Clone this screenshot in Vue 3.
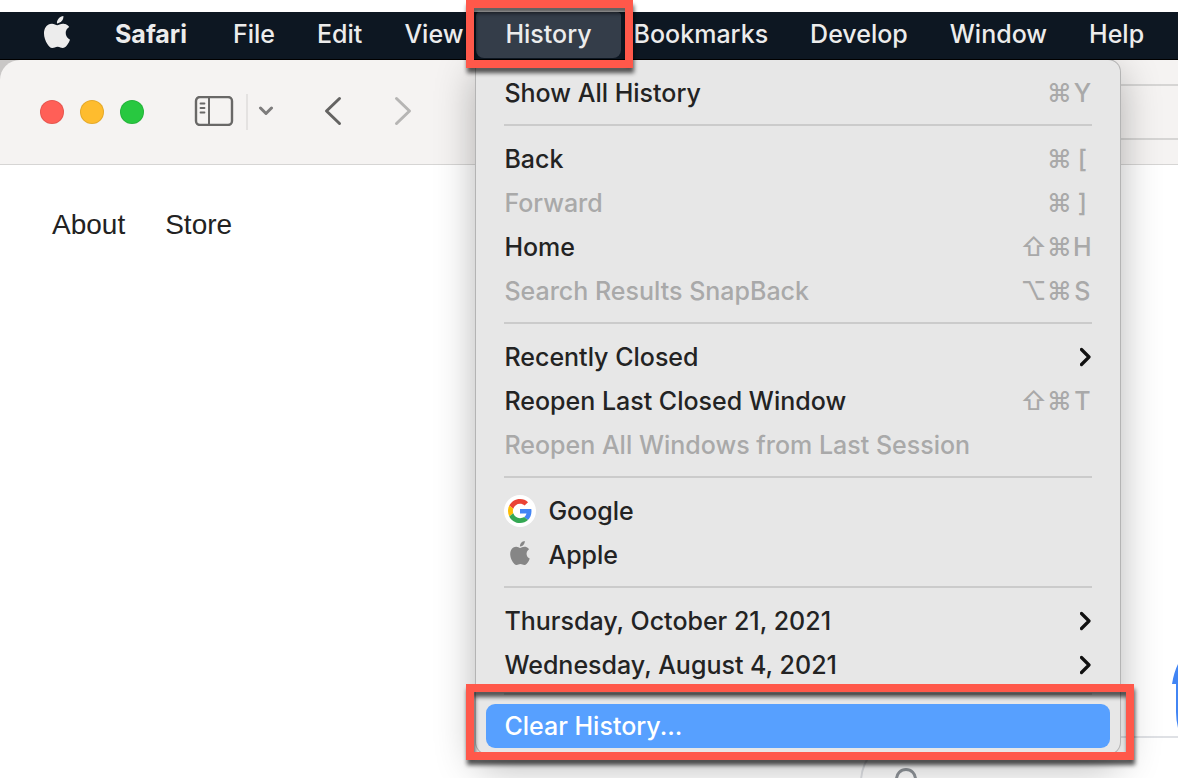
<script setup>
const menusBefore = ['File', 'Edit', 'View']
const menusAfter = ['Bookmarks', 'Develop', 'Window', 'Help']

const groups = [
  [{ label: 'Show All History', keys: ['⌘', 'Y'] }],
  [
    { label: 'Back', keys: ['⌘', '['] },
    { label: 'Forward', keys: ['⌘', ']'], disabled: true },
    { label: 'Home', keys: ['⇧', '⌘', 'H'] },
    { label: 'Search Results SnapBack', keys: ['⌥', '⌘', 'S'], disabled: true },
  ],
  [
    { label: 'Recently Closed', submenu: true },
    { label: 'Reopen Last Closed Window', keys: ['⇧', '⌘', 'T'] },
    { label: 'Reopen All Windows from Last Session', disabled: true },
  ],
  [
    { label: 'Google', icon: 'google' },
    { label: 'Apple', icon: 'apple' },
  ],
  [
    { label: 'Thursday, October 21, 2021', submenu: true },
    { label: 'Wednesday, August 4, 2021', submenu: true },
  ],
]

const applePath =
  'M12.152 6.896c-.948 0-2.415-1.078-3.96-1.04-2.04.027-3.91 1.183-4.961 3.014-2.117 3.675-.546 9.103 1.519 12.09 1.013 1.454 2.208 3.09 3.792 3.039 1.52-.065 2.09-.987 3.935-.987 1.831 0 2.35.987 3.96.948 1.637-.026 2.676-1.48 3.676-2.948 1.156-1.688 1.636-3.325 1.662-3.415-.039-.013-3.182-1.221-3.22-4.857-.026-3.04 2.48-4.494 2.597-4.559-1.429-2.09-3.623-2.324-4.39-2.376-2-.156-3.675 1.09-4.61 1.09zM15.53 3.83c.843-1.012 1.4-2.427 1.245-3.83-1.207.052-2.662.805-3.532 1.818-.78.896-1.454 2.338-1.273 3.714 1.338.104 2.715-.688 3.559-1.701'
</script>

<template>
  <div class="desktop">
    <nav class="menubar" aria-label="Menu bar">
      <button class="menu-title logo" aria-label="Apple menu">
        <svg viewBox="0 0 24 24" width="32" height="32"><path :d="applePath" fill="currentColor" /></svg>
      </button>
      <button class="menu-title app-name">Safari</button>
      <button v-for="name in menusBefore" :key="name" class="menu-title">{{ name }}</button>

      <div class="menu-holder">
        <button class="menu-title active" aria-expanded="true">History</button>

        <div class="dropdown">
          <ul v-for="(group, i) in groups" :key="i" class="group">
            <li v-for="item in group" :key="item.label">
              <button class="item" :disabled="item.disabled">
                <span v-if="item.icon === 'google'" class="favicon round">
                  <svg viewBox="0 0 48 48" width="24" height="24">
                    <path fill="#EA4335" d="M24 9.5c3.54 0 6.71 1.22 9.21 3.6l6.85-6.85C35.9 2.38 30.47 0 24 0 14.62 0 6.51 5.38 2.56 13.22l7.98 6.19C12.43 13.72 17.74 9.5 24 9.5z" />
                    <path fill="#4285F4" d="M46.98 24.55c0-1.57-.15-3.09-.38-4.55H24v9.02h12.94c-.58 2.96-2.26 5.48-4.78 7.18l7.73 6c4.51-4.18 7.09-10.36 7.09-17.65z" />
                    <path fill="#FBBC05" d="M10.53 28.59c-.48-1.45-.76-2.99-.76-4.59s.27-3.14.76-4.59l-7.98-6.19C.92 16.46 0 20.12 0 24c0 3.88.92 7.54 2.56 10.78l7.97-6.19z" />
                    <path fill="#34A853" d="M24 48c6.48 0 11.93-2.13 15.89-5.81l-7.73-6c-2.15 1.45-4.92 2.3-8.16 2.3-6.26 0-11.57-4.22-13.47-9.91l-7.98 6.19C6.51 42.62 14.62 48 24 48z" />
                  </svg>
                </span>
                <span v-else-if="item.icon === 'apple'" class="favicon">
                  <svg viewBox="0 0 24 28" width="24" height="28"><path :d="applePath" fill="#868686" /></svg>
                </span>
                <span class="label">{{ item.label }}</span>
                <span v-if="item.keys" class="keys">
                  <span v-for="key in item.keys" :key="key" class="key">{{ key }}</span>
                </span>
                <svg v-if="item.submenu" viewBox="0 0 12 20" width="12" height="20">
                  <path d="M1.500 2.500L9 10L1.500 17.500" fill="none" stroke="#111" stroke-width="3.200" stroke-linecap="round" stroke-linejoin="round" />
                </svg>
              </button>
            </li>
          </ul>

          <div class="clear">
            <button class="item selected"><span class="label">Clear History...</span></button>
            <div class="callout callout-clear"></div>
          </div>
        </div>

        <div class="callout callout-title"></div>
      </div>

      <button v-for="name in menusAfter" :key="name" class="menu-title">{{ name }}</button>
    </nav>

    <div class="window">
      <header class="toolbar">
        <div class="lights">
          <button class="light red" aria-label="Close"></button>
          <button class="light yellow" aria-label="Minimize"></button>
          <button class="light green" aria-label="Zoom"></button>
        </div>
        <button class="tool sidebar" aria-label="Sidebar">
          <svg viewBox="0 0 40 30" width="40" height="30" fill="none" stroke="#696867" stroke-linecap="round">
            <rect x="2" y="1" width="36" height="28" rx="4" stroke-width="2.400" />
            <path d="M15 1v28" stroke-width="2" stroke-linecap="butt" />
            <path d="M6.500 7.500h4M6.500 12h4M6.500 16.500h4" stroke-width="1.800" />
          </svg>
        </button>
        <span class="divider"></span>
        <button class="tool chevron" aria-label="Tab groups">
          <svg viewBox="0 0 16 10" width="16" height="10" fill="none" stroke="#7d7c7c" stroke-width="3" stroke-linecap="round" stroke-linejoin="round">
            <path d="M2.500 2L8 7.500L13.500 2" />
          </svg>
        </button>
        <button class="tool back" aria-label="Back">
          <svg viewBox="0 0 18 30" width="18" height="30" fill="none" stroke="#646362" stroke-width="3" stroke-linecap="round" stroke-linejoin="round">
            <path d="M15.500 2.500L2.500 15L15.500 27.500" />
          </svg>
        </button>
        <button class="tool forward" aria-label="Forward">
          <svg viewBox="0 0 18 30" width="18" height="30" fill="none" stroke="#b6b5b4" stroke-width="3" stroke-linecap="round" stroke-linejoin="round">
            <path d="M2.500 2.500L15.500 15L2.500 27.500" />
          </svg>
        </button>
        <input class="address" type="text" aria-label="Address" />
      </header>

      <main class="page">
        <nav class="links">
          <a href="#">About</a>
          <a href="#">Store</a>
        </nav>
        <div class="search">
          <svg class="glass" viewBox="0 0 34 34" width="34" height="34" fill="none" stroke="#8f9499" stroke-width="3">
            <circle cx="14" cy="13" r="9.500" />
            <path d="M21 20l10 10" />
          </svg>
          <input type="text" aria-label="Search" />
          <svg class="brand" viewBox="0 0 6 66" width="6" height="66">
            <path d="M6 2Q2 10 0 22H4V50Q4 58 6 66z" fill="#4285f4" />
          </svg>
        </div>
      </main>
    </div>
  </div>
</template>

<style>
body {
  margin: 0;
  background: #fff;
}
</style>

<style scoped>
.desktop {
  display: flex;
  flex-direction: column;
  height: 100vh;
  box-sizing: border-box;
  padding-top: 12px;
  overflow: hidden;
  background: #fff;
  font-family: Inter, 'Liberation Sans', sans-serif;
  font-size: 25px;
}

button,
input {
  margin: 0;
  padding: 0;
  border: 0;
  background: none;
  color: inherit;
  font: inherit;
}

svg {
  display: block;
}

.menubar {
  position: relative;
  z-index: 2;
  display: flex;
  flex-shrink: 0;
  height: 48px;
  padding-left: 20px;
  background: #0d1722;
  color: #ececec;
  box-shadow: inset 0 -1px #000;
}

.menu-title {
  height: 46px;
  padding: 0 21px 2px;
  font-weight: 500;
  white-space: nowrap;
}

.logo {
  padding: 0 21px 6px;
}

.app-name {
  padding-right: 25px;
  font-weight: 700;
}

.menu-holder {
  position: relative;
}

.active {
  position: relative;
  z-index: 1;
}

.active::before {
  content: '';
  position: absolute;
  z-index: -1;
  inset: 0 -8px;
  border-radius: 4px 4px 8px 8px;
  background: #343d49;
}

.dropdown {
  position: absolute;
  top: 48px;
  left: -8px;
  width: 644px;
  box-sizing: border-box;
  padding: 11px 10px 6px;
  border-radius: 0 12px 12px 12px;
  background: #e7e7e7;
  color: #232323;
  box-shadow: 0 0 0 1px #b4b4b4, 0 12px 40px rgba(0, 0, 0, 0.3);
  clip-path: inset(0 -70px -70px -70px);
}

.group {
  margin: 0;
  padding: 0;
  list-style: none;
}

.group::after {
  content: '';
  display: block;
  height: 2px;
  margin: 9px 18px 11px;
  background: #cbcbcb;
}

.group:nth-last-child(2)::after {
  margin: 6px 18px 9px;
}

.item {
  display: flex;
  align-items: center;
  width: 100%;
  height: 44px;
  padding: 0 18px;
  font-weight: 500;
  text-align: left;
  white-space: nowrap;
}

.item:disabled {
  color: #a9a9a9;
}

.selected {
  border-radius: 9px;
  background: #57a0ff;
  color: #fff;
}

.label {
  flex: 1;
}

.favicon {
  display: grid;
  place-items: center;
  width: 32px;
  height: 32px;
  margin-right: 12px;
}

.round {
  border-radius: 50%;
  background: #fff;
}

.keys {
  display: flex;
  color: #a9a9a9;
}

.key {
  width: 26px;
  text-align: center;
}

.key:last-child {
  width: 20px;
}

.clear {
  position: relative;
}

.callout {
  position: absolute;
  z-index: 3;
  border: 8px solid #ff584a;
  filter: drop-shadow(1px 5px 2px rgba(0, 0, 0, 0.65));
  pointer-events: none;
}

.callout-title {
  inset: -12px -20px -8px -18px;
}

.callout-clear {
  inset: -20px -24px -12px -20px;
}

.window {
  display: flex;
  flex: 1;
  flex-direction: column;
  min-height: 0;
}

.toolbar {
  display: flex;
  align-items: center;
  flex-shrink: 0;
  height: 104px;
  padding-left: 40px;
  border-bottom: 1px solid #d6d5d4;
  border-top-left-radius: 20px;
  background: #f5f3f2;
  box-shadow: -8px -8px 0 #c9c7c6;
}

.lights {
  display: flex;
  gap: 16px;
}

.light {
  width: 24px;
  height: 24px;
  border-radius: 50%;
  box-shadow: inset 0 0 0 1px rgba(0, 0, 0, 0.1);
}

.red {
  background: #ff5f57;
}

.yellow {
  background: #febc2e;
}

.green {
  background: #28c840;
}

.tool {
  margin-bottom: 2px;
}

.sidebar {
  margin-left: 50px;
}

.divider {
  width: 2px;
  height: 36px;
  margin-left: 12px;
  background: #e4e2e1;
}

.chevron {
  margin-left: 10px;
}

.back {
  margin-left: 50px;
}

.forward {
  margin-left: 52px;
}

.address {
  flex: 1;
  height: 56px;
  box-sizing: border-box;
  margin-left: 180px;
  border: 2px solid #d6d5d4;
  border-right: 0;
  border-radius: 12px 0 0 12px;
}

.page {
  display: flex;
  flex: 1;
  flex-direction: column;
  min-height: 0;
}

.links {
  display: flex;
  gap: 40px;
  padding: 44px 52px 0;
  font-family: 'Liberation Sans', Arial, sans-serif;
  font-size: 28px;
  line-height: 32px;
}

.links a {
  color: #222;
  text-decoration: none;
}

.search {
  position: relative;
  display: flex;
  flex-shrink: 0;
  height: 92px;
  box-sizing: border-box;
  margin-top: 495px;
  margin-left: 73%;
  padding: 28px 0 0 30px;
  border: 2px solid #dfe1e5;
  border-right: 0;
  border-radius: 46px 0 0 46px;
}

.search input {
  flex: 1;
  min-width: 0;
}

.brand {
  position: absolute;
  right: 0;
  bottom: 98px;
}
</style>
